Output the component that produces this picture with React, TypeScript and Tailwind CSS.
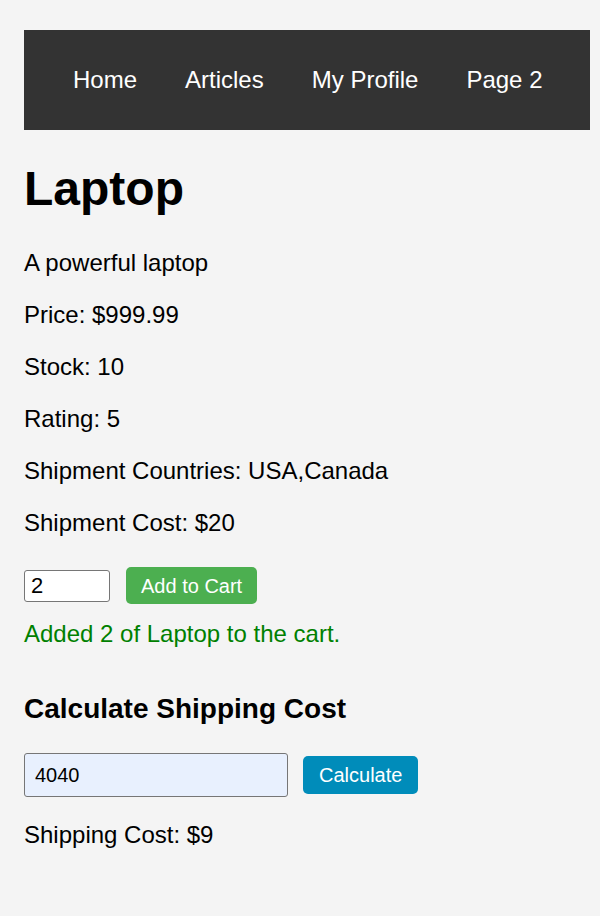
import React, { useState } from 'react';

const navLinks = ['Home', 'Articles', 'My Profile', 'Page 2'];

export default function App() {
  const [qty, setQty] = useState('2');
  const [zip, setZip] = useState('4040');

  return (
    <div className="min-h-[916px] bg-[#f4f4f4] pl-6 pr-[10px] pt-[30px] pb-10 font-['Liberation_Sans',Arial,sans-serif] text-black">
      {/* Nav */}
      <nav className="flex h-[100px] items-center gap-12 bg-[#333333] pl-[49px]">
        {navLinks.map((link) => (
          <a key={link} href="#" className="text-[24px] leading-none text-white">
            {link}
          </a>
        ))}
      </nav>

      <h1 className="mt-[31px] mb-[32px] text-[48px] font-bold leading-[56px]">Laptop</h1>

      <div className="text-[24px] leading-[28px]">
        <p className="mb-6">A powerful laptop</p>
        <p className="mb-6">Price: $999.99</p>
        <p className="mb-6">Stock: 10</p>
        <p className="mb-6">Rating: 5</p>
        <p className="mb-6">Shipment Countries: USA,Canada</p>
        <p>Shipment Cost: $20</p>
      </div>

      {/* Add to cart */}
      <div className="mt-[30px] flex items-center gap-4">
        <input
          type="number"
          value={qty}
          onChange={(e) => setQty(e.target.value)}
          className="h-8 w-[86px] rounded-[3px] border border-[#767676] bg-white px-[6px] text-[22px] outline-none [appearance:textfield]"
        />
        <button className="h-[37px] rounded-[5px] bg-[#4caf50] px-[15px] text-[20px] text-white">
          Add to Cart
        </button>
      </div>
      <p className="mt-4 text-[24px] leading-[28px] text-[#008000]">Added 2 of Laptop to the cart.</p>

      {/* Shipping */}
      <h3 className="mt-[45px] text-[28px] font-bold leading-[32px]">Calculate Shipping Cost</h3>
      <div className="mt-[28px] flex items-center gap-[15px]">
        <input
          type="text"
          value={zip}
          onChange={(e) => setZip(e.target.value)}
          className="h-[44px] w-[264px] rounded-[3px] border border-[#767676] bg-[#e8f0fe] px-[10px] text-[20px] outline-none"
        />
        <button className="h-[38px] rounded-[5px] bg-[#008cba] px-4 text-[20px] text-white">
          Calculate
        </button>
      </div>
      <p className="mt-6 text-[24px] leading-[28px]">Shipping Cost: $9</p>
    </div>
  );
}
